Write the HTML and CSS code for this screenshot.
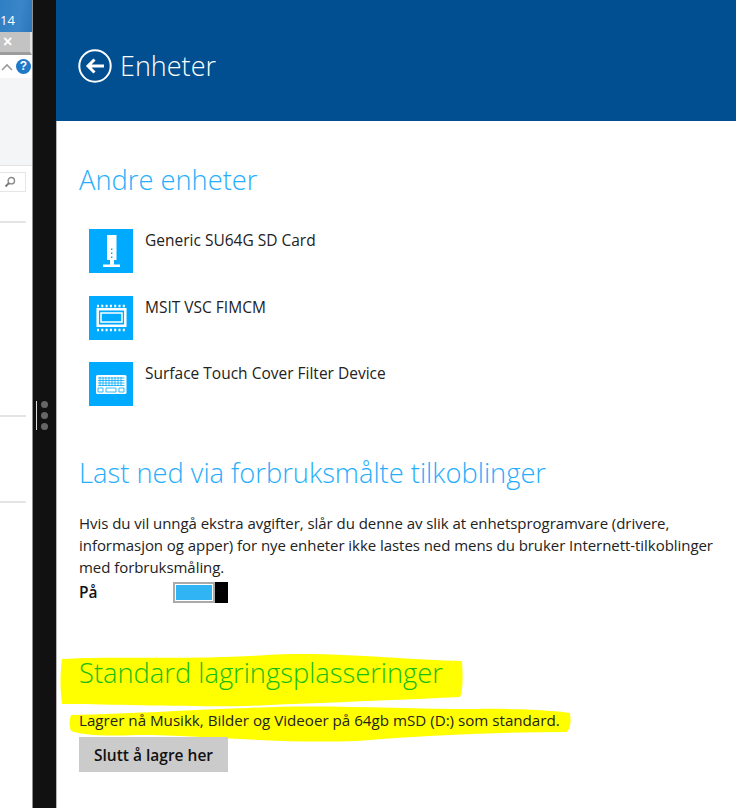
FILE: index.html
```html
<!DOCTYPE html>
<html lang="no">
<head>
<meta charset="utf-8">
<title>Enheter</title>
<link rel="stylesheet" href="styles.css">
</head>
<body>
<div class="screen">
  <aside class="desk">
    <div class="desk-title"><span>14</span></div>
    <div class="desk-tabs"><span class="desk-close">×</span></div>
    <div class="desk-tools">
      <svg class="desk-chevron" width="12" height="8" viewBox="0 0 12 8"><path d="M1 7l5-5 5 5" fill="none" stroke="#9a9a9a" stroke-width="1.6"/></svg>
      <span class="desk-help">?</span>
    </div>
    <div class="desk-ribbon"></div>
    <div class="desk-search">
      <svg width="12" height="12" viewBox="0 0 12 12"><circle cx="7.3" cy="4.7" r="3.2" fill="none" stroke="#8a8a8a" stroke-width="1.4"/><path d="M5 7L1.5 10.500" stroke="#777" stroke-width="1.8"/></svg>
    </div>
    <div class="desk-list">
      <div class="desk-row r1"></div>
      <div class="desk-row r2"></div>
      <div class="desk-row r3"></div>
    </div>
  </aside>
  <div class="divider">
    <div class="grip">
      <span class="grip-line"></span>
      <span class="grip-dots"><i></i><i></i><i></i></span>
    </div>
  </div>
  <main class="panel">
    <header class="panel-head">
      <svg class="back" width="34" height="34" viewBox="0 0 34 34"><circle cx="17" cy="17" r="15.7" fill="none" stroke="#fff" stroke-width="2"/><path d="M26 17H10M16.500 10.500L10 17l6.500 6.500" fill="none" stroke="#fff" stroke-width="3"/></svg>
      <h1>Enheter</h1>
    </header>
    <div class="panel-body">
      <h2 class="h-devices">Andre enheter</h2>
      <ul class="devices">
        <li class="device">
          <span class="tile"><svg width="44" height="44" viewBox="0 0 44 44"><path fill="#fff" d="M18 6h9.500v25H18zM21 31h4v4.500h-4zM14 35.500h17V38H14z"/><path fill="#00aaff" d="M22 19.500h1.400v1.400H22zM22 23.500h1.400v1.400H22zM22 27.500h1.400v1.400H22z"/></svg></span>
          <span class="device-name">Generic SU64G SD Card</span>
        </li>
        <li class="device">
          <span class="tile"><svg width="44" height="44" viewBox="0 0 44 44"><path fill="none" stroke="#fff" stroke-width="2.500" d="M8.700 13.200h27.600v16.600H8.700z"/><path fill="none" stroke="#fff" stroke-width="1.500" d="M12 17h21v9H12z"/><path stroke="#fff" stroke-width="2.500" stroke-dasharray="2 2.300" d="M8 10h29M8 34h29"/></svg></span>
          <span class="device-name">MSIT VSC FIMCM</span>
        </li>
        <li class="device">
          <span class="tile"><svg width="44" height="44" viewBox="0 0 44 44"><rect x="7" y="13" width="30.500" height="19" rx="1.500" fill="#fff"/><path stroke="#00aaff" stroke-width=".8" d="M9 16h26.500M9 18.500h26.500M9 21h26.500M9 23.500h26.500M11 15v9M14 15v9M17 15v9M20 15v9M23 15v9M26 15v9M29 15v9M32 15v9"/><path fill="none" stroke="#00aaff" stroke-width=".8" d="M9 26h5v4H9zM17 26h10v4H17zM30 26h5v4h-5z"/></svg></span>
          <span class="device-name">Surface Touch Cover Filter Device</span>
        </li>
      </ul>
      <h2 class="h-metered">Last ned via forbruksmålte tilkoblinger</h2>
      <p class="metered-text">Hvis du vil unngå ekstra avgifter, slår du denne av slik at enhetsprogramvare (drivere, informasjon og apper) for nye enheter ikke lastes ned mens du bruker Internett-tilkoblinger med forbruksmåling.</p>
      <div class="toggle-row">
        <span class="toggle-label">På</span>
        <span class="toggle"><span class="toggle-fill"></span><span class="toggle-thumb"></span></span>
      </div>
      <div class="storage">
        <svg class="marker" width="680" height="168" viewBox="0 0 680 168"><path fill="#ffff00" d="M5 21C60 18 140 22 210 17C270 13 350 22 405 23C406 40 406 52 403 59C340 62 260 65 190 68C120 69 50 66 5 66C3 50 3 35 5 21Z"/><path fill="#ffff00" d="M14 77C70 76 130 72 190 70C260 66 340 71 420 71C470 70 510 74 513 75C514 85 514 88 510 94C440 94 370 97 300 103C220 106 150 97 80 97C50 98 30 98 14 93C12 87 12 82 14 77Z"/></svg>
        <h2 class="h-storage">Standard lagringsplasseringer</h2>
        <p class="storage-text">Lagrer nå Musikk, Bilder og Videoer på 64gb mSD (D:) som standard.</p>
        <button class="stop-btn" type="button">Slutt å lagre her</button>
      </div>
    </div>
  </main>
</div>
</body>
</html>
```
FILE: styles.css
```css
* { box-sizing: border-box; }
html, body { margin: 0; padding: 0; }
body {
  width: 736px;
  height: 808px;
  overflow: hidden;
  font-family: "Open Sans", "Noto Sans", sans-serif;
  background: #fff;
}
.screen { display: flex; width: 736px; height: 808px; }

/* Desktop window sliver */
.desk {
  width: 33px;
  flex: none;
  background: #fff;
  border-right: 1px solid #8f8f8f;
  display: flex;
  flex-direction: column;
  overflow: hidden;
}
.desk-title {
  height: 32px;
  background: linear-gradient(100deg, #2f7fc4, #3a85c8 60%, #2a76ba);
  color: #fff;
  font: 13px "Open Sans", sans-serif;
  padding: 12px 0 0 0;
  line-height: 16px;
  white-space: nowrap;
}
.desk-title span { display: block; width: 14px; text-align: right; }
.desk-tabs {
  height: 23px;
  background: #c3c3c3;
  border-right: 2px solid #e4e4e4;
  border-bottom: 3px solid #9c9c9c;
  color: #fff;
  font: bold 16px/19px "Liberation Sans", sans-serif;
  padding-left: 3px;
}
.desk-close { display: block; }
.desk-tools {
  height: 23px;
  display: flex;
  align-items: center;
  justify-content: flex-end;
  gap: 3px;
  padding-right: 1px;
  background: #fff;
}
.desk-help {
  width: 15px;
  height: 15px;
  border-radius: 50%;
  background: #1f78c8;
  color: #fff;
  font: bold 12px/15px "Liberation Sans", sans-serif;
  text-align: center;
  flex: none;
}
.desk-ribbon {
  height: 88px;
  background: #f4f5f7;
  border-bottom: 1px solid #e3e3e3;
}
.desk-search {
  margin-top: 6px;
  height: 20px;
  display: flex;
  align-items: center;
  justify-content: flex-end;
  padding-right: 9px;
  border: 1px solid #e6e6e6;
  border-left: 0;
  margin-right: 6px;
}
.desk-list { flex: 1; display: flex; flex-direction: column; }
.desk-row { margin-right: 6px; height: 2px; background: #e4e4e4; }
.r1 { margin-top: 29px; }
.r2 { margin-top: 192px; }
.r3 { margin-top: 84px; }

/* Black divider */
.divider {
  width: 23px;
  flex: none;
  background: #111;
  display: flex;
  flex-direction: column;
  padding-top: 401px;
  padding-left: 3px;
}
.grip { display: flex; gap: 4px; height: 29px; }
.grip-line { width: 1px; height: 29px; background: #ddd; }
.grip-dots { display: flex; flex-direction: column; gap: 4px; }
.grip-dots i { display: block; width: 7px; height: 7px; border-radius: 50%; background: #666; }

/* Settings panel */
.panel { flex: 1; min-width: 0; display: flex; flex-direction: column; background: #fff; }
.panel-head {
  height: 121px;
  background: #014f90;
  display: flex;
  align-items: center;
  gap: 8px;
  padding: 10px 0 0 22px;
}
.back { flex: none; }
h1 {
  margin: 0;
  color: #fff;
  font-size: 27px;
  font-weight: 300;
  line-height: 36px;
}
.panel-body { flex: 1; padding: 0 0 0 22px; border-left: 1px solid #b5b5b5; }
h2 {
  margin: 0;
  color: #26aefc;
  font-size: 27.3px;
  font-weight: 300;
  line-height: 38px;
  white-space: nowrap;
}
.h-devices { margin-top: 40px; }
.devices { list-style: none; margin: 30px 0 0 10px; padding: 0; }
.device { display: flex; height: 44px; gap: 12px; margin-bottom: 22.5px; }
.tile { width: 44px; height: 44px; flex: none; background: #00aaff; }
.tile svg { display: block; }
.device-name { font-size: 15.5px; line-height: 22px; color: #222; white-space: nowrap; }
.h-metered { margin-top: 48px; }
.metered-text {
  margin: 20px 0 0;
  font-size: 15px;
  letter-spacing: -0.05px;
  line-height: 22px;
  color: #222;
  width: 650px;
}
.toggle-row { display: flex; align-items: center; height: 22px; margin-top: 3px; }
.toggle-label { width: 94px; font-size: 15.5px; font-weight: 600; color: #111; }
.toggle {
  width: 55px;
  height: 21px;
  display: flex;
  background: #000;
}
.toggle-fill { width: 42px; background: #30b4f4; border: 2px solid #aaa; box-shadow: inset 0 0 0 1px #fff; }
.toggle-thumb { flex: 1; background: #000; }
.storage { position: relative; margin-left: -22px; padding-left: 22px; height: 198px; }
.marker { position: absolute; left: 0; top: 35px; }
.h-storage { position: relative; padding-top: 51px; color: #17bd16; line-height: 38px; }
.storage-text {
  position: relative;
  margin: 17px 0 0;
  font-size: 15.15px;
  line-height: 22px;
  color: #222;
  white-space: nowrap;
}
.stop-btn {
  display: block;
  position: relative;
  margin-top: 6px;
  width: 149px;
  height: 35px;
  border: 0;
  padding: 0;
  background: #cbcbcb;
  color: #111;
  font: 600 15.5px "Open Sans", sans-serif;
}
```
